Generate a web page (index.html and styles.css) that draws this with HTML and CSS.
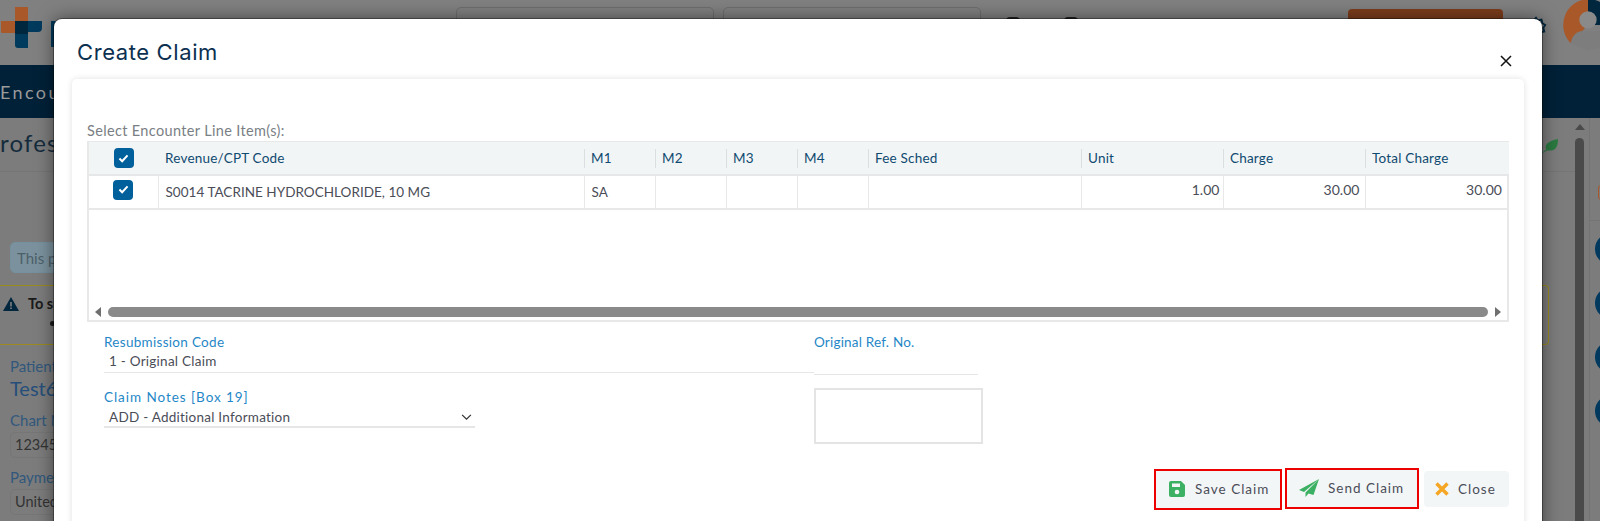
FILE: index.html
```html
<!DOCTYPE html>
<html lang="en">
<head>
<meta charset="utf-8">
<title>Create Claim</title>
<link rel="stylesheet" href="styles.css">
</head>
<body>
<div class="app">
  <header class="topbar">
    <svg class="logo" viewBox="0 0 42 42" width="42" height="42">
      <path fill="#a9582a" d="M14 0h13v14h0v13h-13v-1H1a1 1 0 0 1-1-1V14h14z"/>
      <path fill="#003a5d" d="M14 14h27v7a4 4 0 0 1-4 4H27v16H17a3 3 0 0 1-3-3z"/>
      <path fill="#01273f" d="M14 14h13v13H14z"/>
    </svg>
    <span class="logo-bar"></span>
    <div class="top-input first"></div>
    <div class="top-input"></div>
    <span class="top-dot first"></span>
    <span class="top-dot"></span>
    <div class="top-btn"></div>
    <svg class="gear" viewBox="0 0 24 24" width="22" height="22"><path fill="none" stroke="#01273f" stroke-width="2" d="M12 3l2 3 4-1 1 4 3 2-2 3 1 4-4 1-2 3-3-2-4 1-1-4-3-2 2-3-1-4 4-1z"/></svg>
    <svg class="avatar" viewBox="0 0 60 60" width="52" height="52">
      <path fill="#a9582a" d="M30 0v30L10 51A30 30 0 0 1 30 0z"/>
      <path fill="#01273f" d="M30 0a30 30 0 0 1 30 30H30z"/>
      <circle cx="30" cy="24" r="10" fill="#8a8a8a"/>
      <path fill="#7d7d7d" d="M10 51c2-10 8-14 14-14h18c10 0 18 6 18 14l-30 9z"/>
    </svg>
  </header>
  <nav class="navbar"><span class="nav-item">Encou</span></nav>
  <div class="workspace">
    <main class="main">
      <div class="page-head">
        <h2 class="page-title">rofess</h2>
        <svg class="leaf" viewBox="0 0 20 18" width="18" height="16"><path fill="#2a7a41" d="M1 17C3 15 4 14 6 13 3 8 8 3 19 1c0 9-3 14-11 13-2 0-5 2-7 3z"/></svg>
      </div>
      <div class="notice">This p</div>
      <div class="alert">
        <div class="alert-line">
          <svg viewBox="0 0 16 14" width="16" height="14"><path fill="#01273f" d="M8 0l8 14H0z"/><path fill="#808080" d="M7.200 5h1.600v4.500H7.200zM7.200 10.500h1.600V12H7.200z"/></svg>
          <b>To su</b>
        </div>
        <span class="alert-dot"></span>
      </div>
      <div class="patient">
        <div class="bg-label">Patient</div>
        <div class="bg-name">Test6</div>
        <div class="bg-label gap">Chart N</div>
        <div class="bg-input">12345</div>
        <div class="bg-label gap">Paymen</div>
        <div class="bg-input">United</div>
      </div>
    </main>
    <div class="vscroll"><span class="vscroll-up"></span><span class="vscroll-thumb"></span></div>
    <aside class="rail">
      <span class="rail-tag"></span>
      <span class="rail-rule"></span>
      <span class="rail-dot"></span>
      <span class="rail-dot"></span>
      <span class="rail-dot"></span>
      <span class="rail-dot"></span>
    </aside>
  </div>
</div>

<section class="modal">
  <div class="modal-head">
    <h1 class="modal-title">Create Claim</h1>
    <svg class="modal-x" viewBox="0 0 12 12" width="12" height="12"><path fill="none" stroke="#111" stroke-width="1.500" d="M1 1l10 10M11 1L1 11"/></svg>
  </div>
  <div class="card">
    <div class="select-label">Select Encounter Line Item(s):</div>
    <div class="grid-wrap">
      <table class="grid">
        <colgroup>
          <col class="c-check"><col class="c-code"><col class="c-m"><col class="c-m"><col class="c-m"><col class="c-m"><col class="c-fee"><col class="c-num"><col class="c-num"><col class="c-last">
        </colgroup>
        <thead>
          <tr>
            <th class="check-cell"><span class="check"><svg viewBox="0 0 12 10" width="11" height="9"><path fill="none" stroke="#fff" stroke-width="2.200" d="M1.500 5l3 3 6-6.500"/></svg></span></th>
            <th><span class="th-in plain">Revenue/CPT Code</span></th>
            <th><span class="th-in">M1</span></th>
            <th><span class="th-in">M2</span></th>
            <th><span class="th-in">M3</span></th>
            <th><span class="th-in">M4</span></th>
            <th><span class="th-in">Fee Sched</span></th>
            <th><span class="th-in">Unit</span></th>
            <th><span class="th-in">Charge</span></th>
            <th><span class="th-in">Total Charge</span></th>
          </tr>
        </thead>
        <tbody>
          <tr>
            <td class="check-cell"><span class="check"><svg viewBox="0 0 12 10" width="11" height="9"><path fill="none" stroke="#fff" stroke-width="2.200" d="M1.500 5l3 3 6-6.500"/></svg></span></td>
            <td>S0014 TACRINE HYDROCHLORIDE, 10 MG</td>
            <td>SA</td>
            <td></td>
            <td></td>
            <td></td>
            <td></td>
            <td class="num unit">1.00</td>
            <td class="num">30.00</td>
            <td class="num total">30.00</td>
          </tr>
        </tbody>
      </table>
      <div class="hscroll">
        <span class="arrow left"></span>
        <span class="hthumb"></span>
        <span class="arrow right"></span>
      </div>
    </div>
    <div class="form">
      <div class="field resub">
        <label class="f-label">Resubmission Code</label>
        <div class="f-value">1 - Original Claim</div>
      </div>
      <div class="field ref">
        <label class="f-label">Original Ref. No.</label>
        <div class="f-value"></div>
      </div>
      <div class="field notes">
        <label class="f-label">Claim Notes [Box 19]</label>
        <div class="f-value select">ADD - Additional Information
          <svg viewBox="0 0 12 8" width="11" height="7"><path fill="none" stroke="#333" stroke-width="1.400" d="M1 1l5 5 5-5"/></svg>
        </div>
      </div>
      <div class="textbox"></div>
    </div>
    <div class="actions">
      <button class="btn marked save" type="button">
        <svg viewBox="0 0 16 16" width="16" height="16"><path fill="#3cb063" d="M2 0h10l4 4v10a2 2 0 0 1-2 2H2a2 2 0 0 1-2-2V2a2 2 0 0 1 2-2z"/><path fill="#f3f6f7" d="M3 2.500h8v3.500H3z"/><circle cx="8" cy="11" r="2.300" fill="#f3f6f7"/></svg>
        Save Claim
      </button>
      <button class="btn marked send" type="button">
        <svg viewBox="0 0 20 18" width="20" height="18"><path fill="#3cb063" d="M20 0L0 11l5 2zM20 0L6.500 13.500V18l3-3.500 5 1.500z"/></svg>
        Send Claim
      </button>
      <button class="btn close" type="button">
        <svg viewBox="0 0 14 14" width="14" height="14"><path fill="none" stroke="#f5a623" stroke-width="3.400" d="M1.500 1.500l11 11M12.500 1.500l-11 11"/></svg>
        Close
      </button>
    </div>
  </div>
</section>
</body>
</html>
```
FILE: styles.css
```css
* { box-sizing: border-box; }
html, body { margin: 0; height: 100%; overflow: hidden; }
body {
  position: relative;
  width: 1600px;
  height: 521px;
  background: #7f7f7f;
  font-family: "Lato", "Noto Sans", sans-serif;
  color: #4a4d57;
}

/* dimmed page behind the dialog */
.app { height: 521px; display: flex; flex-direction: column; overflow: hidden; }
.topbar { height: 65px; flex: none; display: flex; align-items: flex-start; position: relative; background: #808080; }
.logo { margin: 7px 0 0 1px; flex: none; }
.logo-bar { width: 10px; height: 26px; margin: 21px 0 0 8px; background: #003a5d; flex: none; }
.top-input { width: 258px; height: 40px; margin: 7px 0 0 9px; flex: none; border: 1px solid #6e6e6e; border-radius: 5px; }
.top-input.first { margin-left: 395px; }
.top-dot { width: 14px; height: 14px; margin: 17px 0 0 44px; flex: none; background: #222; border-radius: 4px; }
.top-dot.first { margin-left: 25px; }
.top-btn { width: 155px; height: 36px; margin: 9px 0 0 270px; flex: none; background: #7d3d1c; border-radius: 4px; }
.gear { margin: 15px 0 0 22px; flex: none; }
.avatar { position: absolute; left: 1562px; top: -1px; }
.navbar { height: 53px; flex: none; background: #012138; display: flex; align-items: center; overflow: hidden; }
.nav-item { color: #9b9b9b; font-size: 18px; letter-spacing: 2.400px; }
.workspace { flex: 1; min-height: 0; display: flex; }
.main { width: 1575px; flex: none; background: #7c7c7c; }
.page-head { height: 54px; display: flex; align-items: center; justify-content: space-between; padding-right: 16px; border-bottom: 1px solid #757575; }
.page-title { margin: -4px 0 0; font-size: 24px; font-weight: 400; letter-spacing: 1.200px; color: #152c3d; }
.leaf { margin-top: 3px; }
.notice { width: 300px; height: 31px; margin: 70px 0 0 10px; padding: 6px 6px; border-radius: 5px; background: #7b929e; border: 1px solid #75909e; color: #4d5f69; font-size: 15px; }
.alert { width: 1549px; height: 60px; margin-top: 12px; border: 1px solid #9a8a20; border-left: 0; border-radius: 0 4px 4px 0; padding: 9px 0 0 3px; font-size: 14.500px; color: #1a1a1a; }
.alert-line { display: flex; align-items: center; gap: 9px; }
.alert-dot { display: block; width: 5px; height: 5px; margin: 9px 0 0 47px; border-radius: 50%; background: #1a1a1a; }
.patient { padding: 12px 0 0 10px; color: #2a5a80; }
.bg-label { font-size: 15px; line-height: 18px; color: #31587c; }
.bg-label.gap { margin-top: 10px; }
.bg-name { font-size: 20px; line-height: 26px; color: #254f7a; }
.bg-input { width: 200px; height: 26px; margin-top: 3px; padding: 3px 4px; border: 1px solid #767676; border-radius: 5px; font-size: 14.500px; color: #333; }
.vscroll { width: 14px; flex: none; padding-top: 6px; display: flex; flex-direction: column; align-items: flex-start; gap: 6px; background: #7c7c7c; }
.vscroll-up { width: 0; height: 0; border: 5px solid transparent; border-top: 0; border-bottom: 6px solid #4a4a4a; }
.vscroll-thumb { flex: 1; width: 9px; margin-top: 2px; border-radius: 5px 5px 0 0; background: #4a4a4a; }
.rail { flex: 1; padding: 67px 0 0 5px; border-left: 1px solid #747474; display: flex; flex-direction: column; gap: 22px; background: #7c7c7c; }
.rail-tag { width: 10px; height: 15px; margin: 0 0 -2px 3px; flex: none; border: 1px solid #a9582a; border-radius: 3px; }
.rail-rule { height: 1px; flex: none; margin: 0 0 -10px -5px; background: #747474; }
.rail-dot { width: 32px; height: 32px; flex: none; border-radius: 50%; background: #013a5e; }

/* dialog */
.modal {
  position: absolute;
  left: 54px;
  top: 19px;
  width: 1488px;
  height: 520px;
  background: #fff;
  border-radius: 8px 8px 0 0;
  box-shadow: 0 0 0 1px rgba(0,0,0,.35), 0 0 18px rgba(0,0,0,.5);
  padding: 0 18px;
}
.modal-head { height: 60px; margin: 0 -18px; padding: 0 30px 0 23px; display: flex; justify-content: space-between; align-items: center; }
.modal-title { margin: 6px 0 0; font-family: "Inter", sans-serif; font-size: 22px; font-weight: 400; letter-spacing: .6px; color: #0c3050; }
.modal-x { margin-top: 24px; }
.card { height: 460px; padding: 44px 15px 0; background: #fff; border-radius: 5px 5px 0 0; box-shadow: 0 0 6px rgba(0,0,0,.12); }
.select-label { height: 18px; font-size: 14.500px; line-height: 16px; color: #7a7f85; letter-spacing: .35px; white-space: nowrap; }
.grid-wrap { height: 181px; display: flex; flex-direction: column; justify-content: space-between; border: 2px solid #e8e8e8; border-top-width: 1px; width: 1422px; }
.grid { width: 1420px; table-layout: fixed; border-collapse: collapse; font-size: 13.500px; }
.c-check { width: 69px; }
.c-code { width: 426px; }
.c-m { width: 71px; }
.c-fee { width: 213px; }
.c-num { width: 142px; }
.c-last { width: 144px; }
.grid th { height: 33px; background: #f2f5f6; font-weight: 400; text-align: left; color: #0f4a70; padding: 0; border-bottom: 2px solid #e5e7e8; }
.th-in { display: block; height: 19px; line-height: 19px; padding-left: 6px; border-left: 1px solid #dcdfe0; white-space: nowrap; letter-spacing: .2px; }
.th-in.plain { border-left: 0; padding-left: 7px; }
.grid td { height: 34px; padding: 1px 6px 1px 7px; border-bottom: 2px solid #e8e8e8; border-left: 1px solid #e8e8e8; color: #4a4d57; white-space: nowrap; letter-spacing: .03px; }
.grid td.check-cell { border-left: 0; padding: 0 0 5px; text-align: center; }
.grid th.check-cell { text-align: center; }
.grid td.num { text-align: right; padding: 0 5px 6px 0; font-size: 14px; }
.grid td.unit { padding-right: 3px; }
.grid td.total { padding-right: 7px; }
.check { display: inline-flex; width: 20px; height: 20px; align-items: center; justify-content: center; vertical-align: middle; border-radius: 4px; background: #00609c; }
.hscroll { height: 14px; margin-bottom: 1px; display: flex; align-items: center; gap: 7px; padding: 0 6px; }
.hthumb { flex: 1; height: 10px; border-radius: 5px; background: #8a8a8a; }
.arrow { width: 0; height: 0; border: 5px solid transparent; }
.arrow.left { border-left: 0; border-right: 6px solid #6f6f6f; }
.arrow.right { border-right: 0; border-left: 6px solid #6f6f6f; }
.form { display: grid; grid-template-columns: 710px 169px; grid-template-rows: 55px 52px; margin: 13px 0 0 17px; }
.field { min-width: 0; }
.f-label { display: block; height: 18px; font-size: 13.500px; line-height: 15px; color: #1f87c7; letter-spacing: .3px; white-space: nowrap; }
.f-value { height: 20px; padding-left: 5px; font-size: 13.500px; line-height: 17px; color: #4a4d57; border-bottom: 1px solid #e6e6e6; letter-spacing: .25px; }
.ref .f-label { letter-spacing: .2px; }
.ref { width: 164px; }
.ref .f-value { height: 22px; }
.notes { width: 371px; }
.notes .f-label { letter-spacing: .95px; }
.notes .f-value { border-bottom-width: 2px; }
.select { display: flex; justify-content: space-between; align-items: center; padding-right: 3px; }
.textbox { height: 56px; margin-top: -2px; border: 2px solid #e4e4e4; }
.actions { display: flex; justify-content: flex-end; align-items: center; margin-top: 26px; width: 1422px; height: 42px; }
.btn { display: flex; align-items: center; font: inherit; font-size: 13.500px; letter-spacing: 1px; color: #4a4d57; background: #f3f6f7; border: 0; border-radius: 4px; padding: 0; white-space: nowrap; }
.btn.marked { border: 2px solid #ec0000; border-radius: 0; height: 41px; }
.save { width: 128px; padding-left: 13px; gap: 10px; margin-right: 3px; }
.send { width: 134px; padding-left: 12px; gap: 9px; margin-right: 5px; margin-top: -2px; }
.close { width: 85px; height: 36px; padding-left: 11px; gap: 9px; }
```
